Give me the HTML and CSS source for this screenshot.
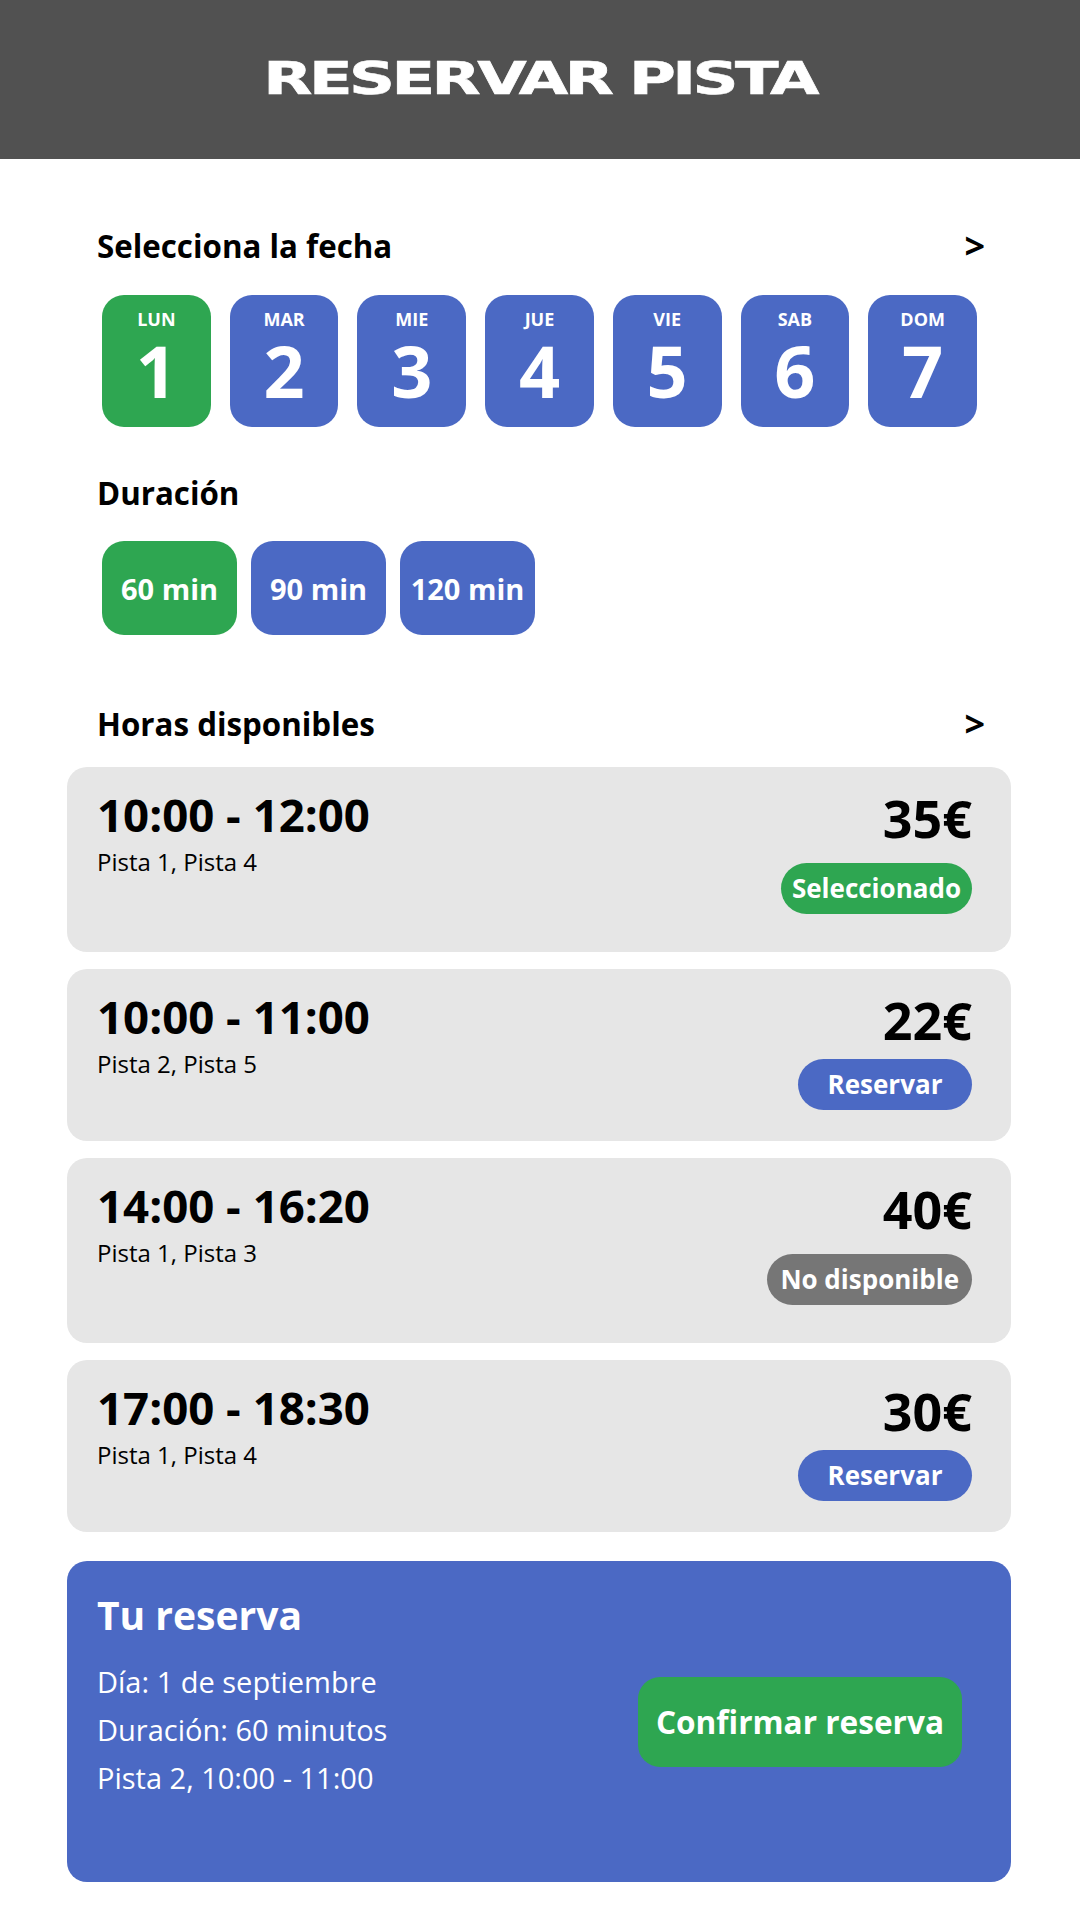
FILE: index.html
```html
<!DOCTYPE html>
<html lang="es">
<head>
<meta charset="utf-8">
<title>Reservar pista</title>
<link rel="stylesheet" href="styles.css">
</head>
<body>
<header class="topbar">
  <h1 class="title"><span class="title-text">RESERVAR PISTA</span></h1>
</header>
<main class="content">
  <div class="section-head first">
    <span>Selecciona la fecha</span>
    <span class="chev">&gt;</span>
  </div>
  <div class="days">
    <div class="day active"><span class="day-name">LUN</span><span class="day-num">1</span></div>
    <div class="day"><span class="day-name">MAR</span><span class="day-num">2</span></div>
    <div class="day"><span class="day-name">MIE</span><span class="day-num">3</span></div>
    <div class="day"><span class="day-name">JUE</span><span class="day-num">4</span></div>
    <div class="day"><span class="day-name">VIE</span><span class="day-num">5</span></div>
    <div class="day"><span class="day-name">SAB</span><span class="day-num">6</span></div>
    <div class="day"><span class="day-name">DOM</span><span class="day-num">7</span></div>
  </div>

  <div class="section-head dur-head">
    <span>Duración</span>
  </div>
  <div class="durations">
    <div class="dur active">60 min</div>
    <div class="dur">90 min</div>
    <div class="dur">120 min</div>
  </div>

  <div class="section-head hours-head">
    <span>Horas disponibles</span>
    <span class="chev">&gt;</span>
  </div>
  <div class="slots">
    <div class="slot tall">
      <div class="slot-info">
        <div class="slot-time">10:00 - 12:00</div>
        <div class="slot-courts">Pista 1, Pista 4</div>
      </div>
      <div class="slot-side">
        <div class="slot-price">35€</div>
        <div class="badge badge-selected">Seleccionado</div>
      </div>
    </div>
    <div class="slot">
      <div class="slot-info">
        <div class="slot-time">10:00 - 11:00</div>
        <div class="slot-courts">Pista 2, Pista 5</div>
      </div>
      <div class="slot-side">
        <div class="slot-price">22€</div>
        <div class="badge badge-book">Reservar</div>
      </div>
    </div>
    <div class="slot tall">
      <div class="slot-info">
        <div class="slot-time">14:00 - 16:20</div>
        <div class="slot-courts">Pista 1, Pista 3</div>
      </div>
      <div class="slot-side">
        <div class="slot-price">40€</div>
        <div class="badge badge-off">No disponible</div>
      </div>
    </div>
    <div class="slot">
      <div class="slot-info">
        <div class="slot-time">17:00 - 18:30</div>
        <div class="slot-courts">Pista 1, Pista 4</div>
      </div>
      <div class="slot-side">
        <div class="slot-price">30€</div>
        <div class="badge badge-book">Reservar</div>
      </div>
    </div>
  </div>

  <section class="summary">
    <div class="summary-info">
      <h2 class="summary-title">Tu reserva</h2>
      <p class="summary-line">Día: 1 de septiembre</p>
      <p class="summary-line">Duración: 60 minutos</p>
      <p class="summary-line">Pista 2, 10:00 - 11:00</p>
    </div>
    <div class="confirm">Confirmar reserva</div>
  </section>
</main>
</body>
</html>
```

FILE: styles.css
```css
* { box-sizing: border-box; }

html, body {
  margin: 0;
  padding: 0;
  background: #ffffff;
}

body {
  width: 1080px;
  min-height: 1920px;
  font-family: "Open Sans", "Noto Sans", "Liberation Sans", sans-serif;
  color: #000000;
}

.topbar {
  height: 159px;
  background: #515151;
  display: flex;
  align-items: center;
  justify-content: center;
}

.title {
  margin: 0 0 3px 0;
  font-family: "DejaVu Sans", "Liberation Sans", sans-serif;
  font-weight: 700;
  font-size: 45px;
  line-height: 1;
  color: #ffffff;
}

.title-text {
  display: inline-block;
  transform: scaleX(1.42);
  letter-spacing: -2.5px;
  -webkit-text-stroke: 0.6px #ffffff;
}

.content {
  padding: 0 69px 0 67px;
}

.section-head {
  display: flex;
  justify-content: space-between;
  align-items: center;
  padding: 0 26px 0 30px;
  height: 42px;
  font-size: 31.3px;
  font-weight: 700;
  line-height: 42px;
}

.section-head.first { margin-top: 66px; }
.section-head.dur-head { margin-top: 45px; }
.section-head.hours-head { margin-top: 68px; }

.chev {
  font-size: 36px;
  font-weight: 700;
  line-height: 42px;
}

.days {
  display: grid;
  grid-template-columns: repeat(7, 1fr);
  gap: 19px;
  margin: 28px 34px 0 35px;
}

.day {
  height: 132px;
  border-radius: 22px;
  background: #4b69c4;
  color: #ffffff;
  display: flex;
  flex-direction: column;
  align-items: center;
  padding-top: 13px;
}

.day.active { background: #2ea651; }

.day-name {
  font-size: 18px;
  font-weight: 700;
  line-height: 22px;
}

.day-num {
  margin-top: 4px;
  font-size: 72px;
  font-weight: 700;
  line-height: 72px;
}

.durations {
  display: flex;
  gap: 14px;
  margin: 27px 0 0 35px;
}

.dur {
  width: 135px;
  height: 94px;
  border-radius: 22px;
  background: #4b69c4;
  color: #ffffff;
  font-size: 29px;
  font-weight: 700;
  display: flex;
  align-items: center;
  justify-content: center;
}

.dur.active { background: #2ea651; }

.slots {
  margin-top: 22px;
  display: flex;
  flex-direction: column;
  gap: 17px;
}

.slot {
  background: #e6e6e6;
  border-radius: 20px;
  display: flex;
  justify-content: space-between;
  align-items: flex-start;
  padding: 19px 39px 31px 30px;
}

.slot.tall { padding-bottom: 38px; }

.slot-time {
  font-size: 45.6px;
  font-weight: 700;
  line-height: 56px;
}

.slot-courts {
  margin-top: 5px;
  font-size: 24px;
  font-weight: 400;
  line-height: 30px;
}

.slot-side {
  margin-top: 2px;
  display: flex;
  flex-direction: column;
  align-items: flex-end;
}

.slot-price {
  font-size: 52px;
  font-weight: 700;
  line-height: 60px;
}

.badge {
  margin-top: 9px;
  min-width: 174px;
  height: 51px;
  padding: 0 11px;
  border-radius: 26px;
  color: #ffffff;
  font-size: 26px;
  font-weight: 700;
  line-height: 51px;
  text-align: center;
}

.slot.tall .badge { margin-top: 15px; }

.badge-selected { background: #2ea651; }
.badge-book { background: #4b69c4; }
.badge-off { background: #767676; padding: 0 13px; }

.summary {
  margin-top: 29px;
  height: 321px;
  background: #4b69c4;
  border-radius: 20px;
  color: #ffffff;
  display: flex;
  justify-content: space-between;
  align-items: flex-start;
  padding: 29px 49px 29px 30px;
}

.summary-title {
  margin: 0;
  font-size: 39px;
  font-weight: 700;
  line-height: 50px;
}

.summary-line {
  margin: 0;
  font-size: 29px;
  font-weight: 400;
  line-height: 48px;
}

.summary-title + .summary-line { margin-top: 18px; }

.confirm {
  align-self: center;
  height: 90px;
  padding: 0 18px;
  border-radius: 22px;
  background: #2ea651;
  color: #ffffff;
  font-size: 31.6px;
  font-weight: 700;
  line-height: 90px;
  white-space: nowrap;
}
```
